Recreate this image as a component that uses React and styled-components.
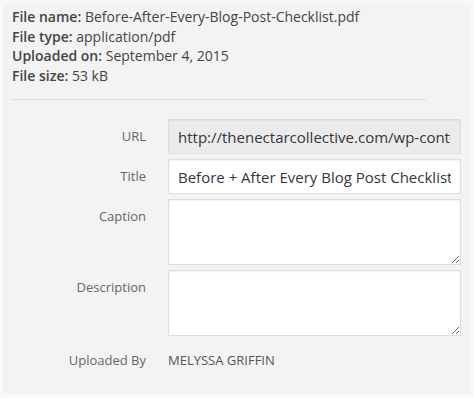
import React from "react";
import styled, { createGlobalStyle } from "styled-components";

const Global = createGlobalStyle`
  html, body { margin: 0; padding: 0; background: #f9f9f9; }
  body { font-family: "Open Sans", "Liberation Sans", sans-serif; }
  * { box-sizing: border-box; }
`;

const Panel = styled.div`
  margin: 3px;
  height: 391px;
  background: #f3f3f3;
  padding: 4px 9px 0 9px;
  overflow: hidden;
`;

const Details = styled.div`
  font-size: 14px;
  line-height: 19.5px;
  color: #444;
  padding-bottom: 14px;
  border-bottom: 1px solid #dcdcdc;
  width: 414px;
`;

const Line = styled.div`
  white-space: nowrap;
`;

const Key = styled.strong`
  font-weight: 600;
`;

const Form = styled.div`
  display: grid;
  grid-template-columns: 134px 293px;
  column-gap: 22px;
  row-gap: 5px;
  margin-top: 19px;
`;

const Label = styled.label`
  font-size: 13px;
  color: #666;
  text-align: right;
  line-height: 19px;
  padding-top: ${(p) => p.$top || 8}px;
`;

const TextInput = styled.input`
  width: 100%;
  height: 35px;
  margin: 0;
  padding: 0 9px;
  font-family: inherit;
  font-size: 15px;
  color: #32373c;
  background: ${(p) => (p.readOnly ? "#ebebeb" : "#fff")};
  border: 1px solid #ddd;
  box-shadow: inset 0 1px 2px rgba(0, 0, 0, 0.05);
  outline: none;
`;

const TextArea = styled.textarea`
  display: block;
  width: 100%;
  height: 66px;
  margin: 0;
  padding: 6px 9px;
  font-family: inherit;
  font-size: 15px;
  background: #fff;
  border: 1px solid #ddd;
  box-shadow: inset 0 1px 2px rgba(0, 0, 0, 0.05);
  outline: none;
  resize: vertical;
`;

const Value = styled.div`
  font-size: 13px;
  color: #555;
  line-height: 19px;
  padding-top: 10px;
`;

export default function App() {
  return (
    <>
      <Global />
      <Panel>
        <Details>
          <Line><Key>File name:</Key> Before-After-Every-Blog-Post-Checklist.pdf</Line>
          <Line><Key>File type:</Key> application/pdf</Line>
          <Line><Key>Uploaded on:</Key> September 4, 2015</Line>
          <Line><Key>File size:</Key> 53 kB</Line>
        </Details>
        <Form>
          <Label>URL</Label>
          <TextInput readOnly value="http://thenectarcollective.com/wp-content/uploads/2015/09/Before-After-Every-Blog-Post-Checklist.pdf" />
          <Label>Title</Label>
          <TextInput defaultValue="Before + After Every Blog Post Checklist" />
          <Label>Caption</Label>
          <TextArea />
          <Label>Description</Label>
          <TextArea />
          <Label $top={10}>Uploaded By</Label>
          <Value>MELYSSA GRIFFIN</Value>
        </Form>
      </Panel>
    </>
  );
}
